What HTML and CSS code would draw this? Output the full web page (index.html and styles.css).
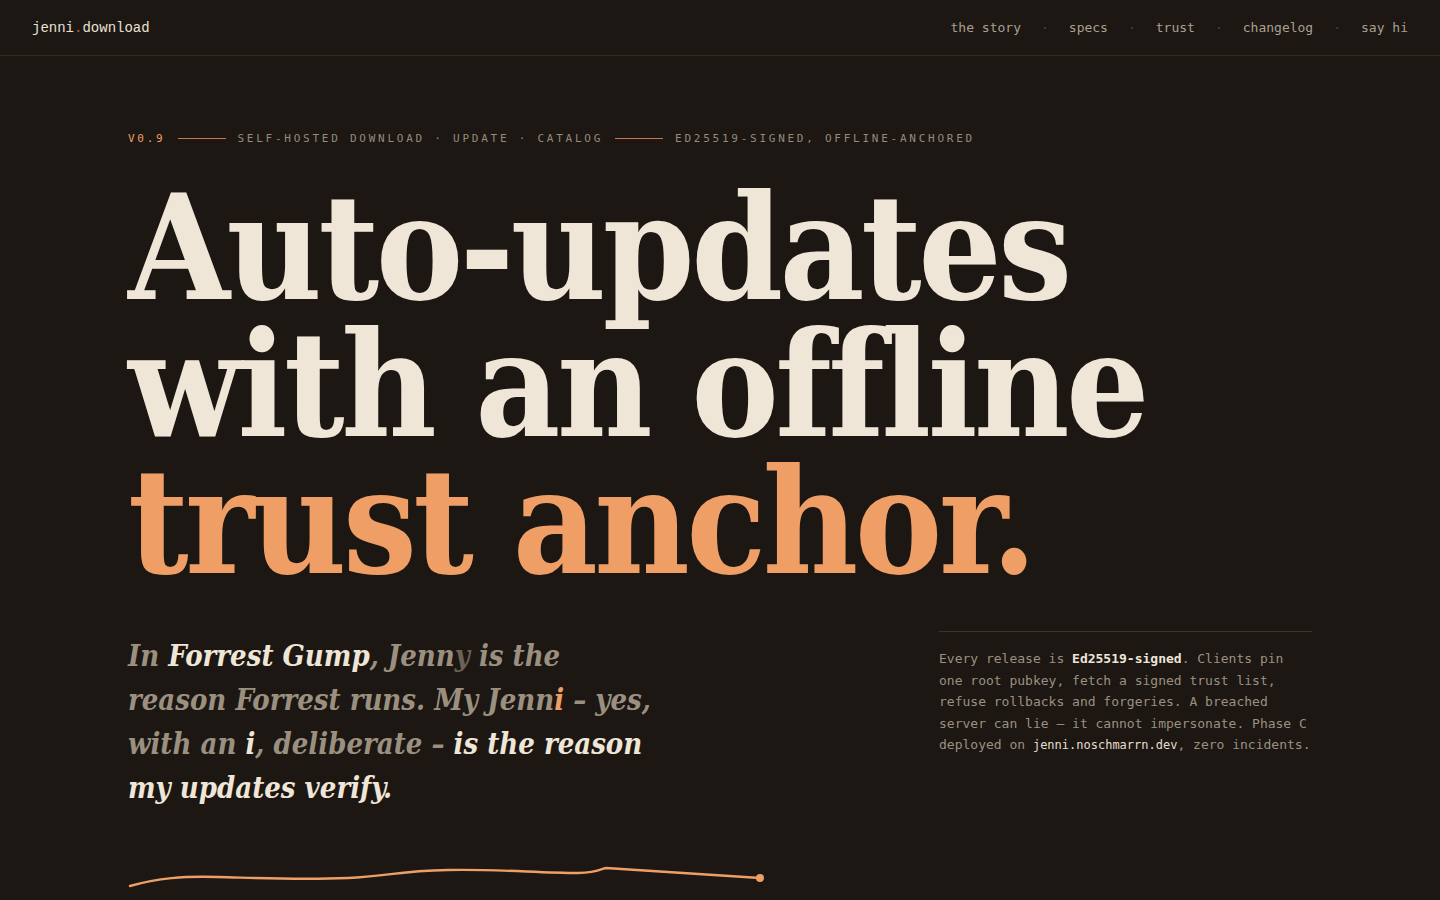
FILE: index.html
```html
<!DOCTYPE html>
<html lang="en">
<head>
  <meta charset="UTF-8">
  <title>jenni.download</title>
  <link rel="stylesheet" href="styles.css">
</head>
<body>
  <header class="topbar">
    <a class="logo" href="#">jenni<span class="logo-dot">.</span>download</a>
    <nav class="nav">
      <a href="#story">the story</a>
      <span class="sep">·</span>
      <a href="#specs">specs</a>
      <span class="sep">·</span>
      <a href="#trust">trust</a>
      <span class="sep">·</span>
      <a href="#changelog">changelog</a>
      <span class="sep">·</span>
      <a href="#hi">say hi</a>
    </nav>
  </header>

  <main class="hero">
    <div class="eyebrow">
      <span class="version">V0.9</span>
      <span class="rule"></span>
      <span>SELF-HOSTED DOWNLOAD · UPDATE · CATALOG</span>
      <span class="rule"></span>
      <span>ED25519-SIGNED, OFFLINE-ANCHORED</span>
    </div>

    <h1 class="headline">Auto-updates<br>with an offline<br><span class="accent">trust anchor.</span></h1>

    <div class="hero-foot">
      <p class="lede">In <b>Forrest Gump</b>, Jenn<span class="fade">y</span> is the<br>reason Forrest runs. My Jenn<span class="hot">i</span> – yes,<br>with an <b>i</b>, deliberate – <b>is the reason<br>my updates verify.</b></p>
      <aside class="note">
        Every release is <strong>Ed25519-signed</strong>. Clients pin one root pubkey, fetch a signed trust list, refuse rollbacks and forgeries. A breached server can lie — it cannot impersonate. Phase C deployed on <code>jenni.noschmarrn.dev</code>, zero incidents.
      </aside>
    </div>

    <svg class="squiggle" width="640" height="30" viewBox="0 0 640 30">
      <path d="M2 24 C 30 16, 55 14, 90 15 C 130 16, 170 18, 220 16 C 260 14, 270 9, 320 8 C 370 7, 410 11, 450 11 C 470 11, 475 6, 478 6 L 632 16" fill="none" stroke="#ef9f66" stroke-width="2.4" stroke-linecap="round"/>
      <circle cx="632" cy="16" r="4" fill="#ef9f66"/>
    </svg>
  </main>
</body>
</html>
```

FILE: styles.css
```css
body {
  margin: 0;
  background: #1c1713;
  color: #efe6d8;
  font-family: "DejaVu Sans Mono", "Liberation Mono", monospace;
  min-height: 100vh;
}
a {
  color: inherit;
  text-decoration: none;
}
.topbar {
  height: 55px;
  padding: 0 32px;
  display: flex;
  align-items: center;
  justify-content: space-between;
  border-bottom: 1px solid #332c25;
}
.logo {
  font-family: "Liberation Mono", monospace;
  font-size: 14px;
  color: #e9e1d4;
}
.logo-dot {
  color: #b8623c;
}
.nav {
  display: flex;
  align-items: center;
  gap: 20px;
  font-size: 13px;
  color: #aaa08f;
}
.nav .sep {
  color: #4a4239;
}
.hero {
  padding: 0 128px;
}
.eyebrow {
  margin-top: 76px;
  display: flex;
  align-items: center;
  gap: 12px;
  font-size: 11px;
  letter-spacing: 0.25em;
  color: #958a7b;
}
.eyebrow .version {
  color: #ef9f66;
}
.eyebrow .rule {
  width: 48px;
  height: 1px;
  background: #c9774a;
}
.headline {
  margin: 34px 0 0;
  font-family: "DejaVu Serif Condensed", "DejaVu Serif", serif;
  font-stretch: condensed;
  font-weight: 700;
  font-size: 146px;
  line-height: 137px;
  letter-spacing: -3.5px;
  color: #efe6d8;
}
.headline .accent {
  color: #ef9f66;
}
.hero-foot {
  margin-top: 41px;
  display: flex;
  justify-content: space-between;
  align-items: flex-start;
}
.lede {
  margin: 3px 0 0;
  font-family: "DejaVu Serif Condensed", "DejaVu Serif", serif;
  font-stretch: condensed;
  font-style: italic;
  font-weight: 700;
  font-size: 29px;
  line-height: 44px;
  color: #9b9080;
}
.lede b {
  color: #efe6d8;
}
.lede .fade {
  color: #6b6257;
}
.lede .hot {
  color: #ef9f66;
}
.note {
  width: 373px;
  border-top: 1px solid #3a332b;
  padding-top: 16px;
  font-size: 13px;
  line-height: 21.5px;
  color: #9b9080;
}
.note strong {
  color: #efe6d8;
}
.note code {
  font-family: inherit;
  font-size: 12px;
  color: #e6ddcf;
}
.squiggle {
  display: block;
  margin-top: 52px;
}
```
